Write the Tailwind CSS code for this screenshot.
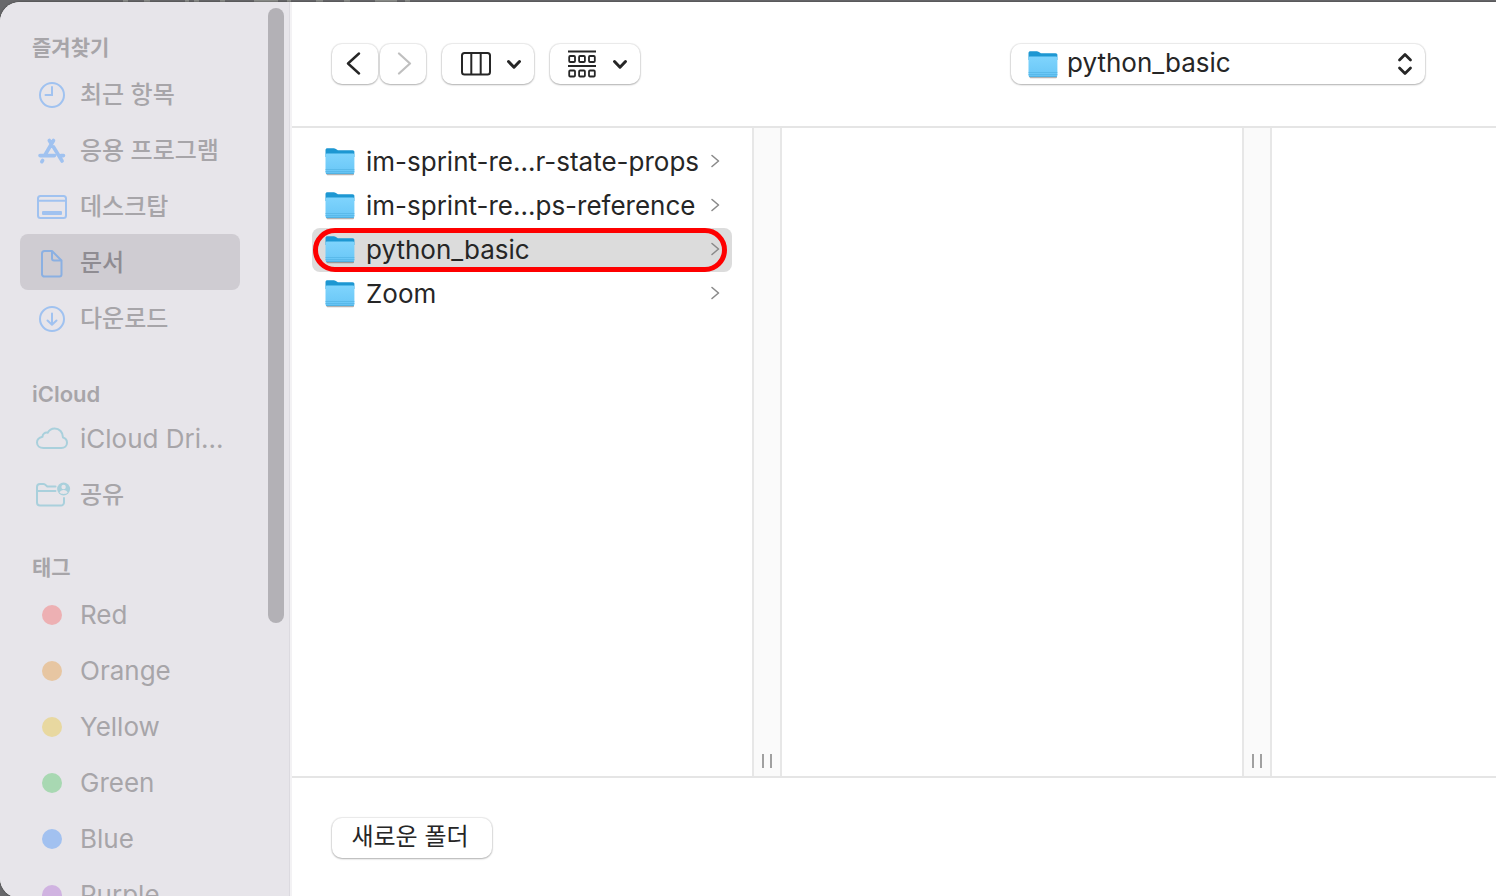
<!DOCTYPE html>
<html lang="ko">
<head>
<meta charset="utf-8">
<title>python_basic</title>
<script src="https://cdn.jsdelivr.net/npm/@tailwindcss/browser@4"></script>
</head>
<body class="relative h-screen overflow-hidden bg-[#68686b] font-['Inter','Noto_Sans_CJK_KR',sans-serif] text-[26px] text-[#262626]">
<svg width="0" height="0" class="absolute" aria-hidden="true">
  <defs>
    <linearGradient id="front" x1="0" y1="0" x2="0" y2="1"><stop offset="0" stop-color="#7fd4fd"/><stop offset="1" stop-color="#68c6f6"/></linearGradient>
    <symbol id="folder" viewBox="0 0 32 32">
      <path d="M2.500 28.500h27.500v1a1 1 0 0 1-1 .8H3.500a1 1 0 0 1-1-.8z" fill="#000" opacity=".3"/>
      <path d="M1.500 5c0-1.200.8-1.800 2-1.800h6.200c.9 0 1.500.2 2.200.8l1.200.8c.5.4 1 .5 1.700.5H28.500c1.300 0 1.900.7 1.900 1.800V12H1.500z" fill="#1d97d2"/>
      <path d="M1.500 10c0-1 .7-1.500 1.700-1.500h25.500c1 0 1.700.5 1.700 1.500v17.200c0 1.200-.6 1.800-1.800 1.800H3.300c-1.200 0-1.800-.6-1.800-1.800z" fill="url(#front)"/>
      <path d="M1.500 24.500h28.900M1.500 26.500h28.900" stroke="#52b3e4" stroke-width=".7"/>
      <path d="M2 28.400h27.900" stroke="#48a9da" stroke-width=".8"/>
    </symbol>
    <symbol id="chev" viewBox="0 0 10 14"><path d="M2 1.500l6.500 5.500L2 12.500" fill="none" stroke="#8a8a8a" stroke-width="1.600" stroke-linecap="round" stroke-linejoin="round"/></symbol>
    <symbol id="down" viewBox="0 0 16 12"><path d="M2.500 3.500L8 9.200 13.500 3.500" fill="none" stroke="#262626" stroke-width="3" stroke-linecap="round" stroke-linejoin="round"/></symbol>
  </defs>
</svg>
<svg class="absolute left-0 top-0" width="420" height="2" fill="#8d8f8c" aria-hidden="true">
  <path d="M123 0h5v2h-5zM144 0h6v2h-6zM185 0h4v2h-4zM194 0h5v2h-5zM220 0h5v2h-5zM254 0h24v2h-24zM287 0h4v2h-4zM316 0h7v2h-7zM344 0h6v2h-6zM375 0h22v2h-22zM405 0h5v2h-5z"/>
</svg>

<div class="relative mt-0.5 flex h-screen overflow-hidden rounded-l-[20px] bg-white shadow-[0_0_2px_#333]">
  <aside class="flex w-[292px] shrink-0 border-r-2 border-[#f3f2f4] bg-[#e7e5ea] text-[#a7a5a9]">
    <nav class="w-[268px] pr-7 pl-5 [&_a]:flex [&_a]:h-14 [&_a]:items-center [&_a]:gap-3 [&_a]:rounded-lg [&_a]:pl-4 [&_a]:whitespace-nowrap [&_h2]:flex [&_h2]:h-16 [&_h2]:items-end [&_h2]:pl-3 [&_h2]:text-[22px] [&_h2]:leading-8 [&_h2]:font-semibold [&_svg]:w-9 [&_svg]:h-8 [&_svg]:-mr-1 [&_svg]:shrink-0">
      <h2 class="pb-0.5"><span class="text-[21px]">즐겨찾기</span></h2>
      <a href="#"><svg viewBox="0 0 36 32" fill="none" stroke="#a0c2f0" stroke-width="2" stroke-linecap="round"><circle cx="16" cy="17" r="12"/><path d="M16 9v8H9.500"/></svg><span class="pt-0.5 text-[24px] font-medium">최근 항목</span></a>
      <a href="#"><svg viewBox="0 0 36 32" fill="none" stroke="#a0c2f0" stroke-width="3.600" stroke-linecap="round"><path d="M4 21.600h14.500M25 21.600h2.500M17.500 6.500L9 21M13.300 6.500l2 3.200M17.500 13l8.600 14M6.600 26.500l-.8 1.200"/></svg><span class="pt-0.5 text-[24px] font-medium">응용 프로그램</span></a>
      <a href="#"><svg viewBox="0 0 36 32" fill="none" stroke="#a0c2f0" stroke-width="2"><rect x="2" y="6" width="28" height="22" rx="2.500"/><path d="M2 10.800h28"/><rect x="6" y="21" width="20" height="4" rx="1" fill="#a0c2f0" stroke="none"/></svg><span class="pt-0.5 text-[24px] font-medium">데스크탑</span></a>
      <a href="#" aria-current="page" class="bg-[#cfccd2] text-[#8f8c92]"><svg viewBox="0 0 36 32" fill="none" stroke="#8bb0e2" stroke-width="2" stroke-linejoin="round"><path d="M8.500 5H16l9.500 9.500v14a2 2 0 0 1-2 2h-15A2.500 2.500 0 0 1 6 28.500v-21A2.500 2.500 0 0 1 8.500 5z"/><path d="M16 5v7.500a2 2 0 0 0 2 2h7.500"/></svg><span class="pt-0.5 text-[24px] font-medium">문서</span></a>
      <a href="#"><svg viewBox="0 0 36 32" fill="none" stroke="#a0c2f0" stroke-width="2" stroke-linecap="round" stroke-linejoin="round"><circle cx="16" cy="17" r="12"/><path d="M16 11.500v11M11.500 18.500l4.500 4.200 4.500-4.200"/></svg><span class="pt-0.5 text-[24px] font-medium">다운로드</span></a>
      <h2>iCloud</h2>
      <a href="#"><svg viewBox="0 0 36 32" fill="none" stroke="#a9d0dc" stroke-width="2" stroke-linejoin="round"><path d="M7.500 26h17.800c3.300 0 5.700-2.300 5.700-5.300 0-2.700-1.600-4.500-4-5.200 0-5.200-3.700-9-8.300-9-3.200 0-5.600 1.600-7 4.200-2.800-.6-5.200 1.200-5.200 4.100C3.400 15.500 1 17.400 1 20.500c0 3.100 2.700 5.500 6.500 5.500z"/></svg><span>iCloud Dri...</span></a>
      <a href="#"><svg viewBox="0 0 36 32" fill="none" stroke="#a9d0dc" stroke-width="2" stroke-linecap="round"><path d="M19.500 8.400h-8.200L9 6.500c-.6-.4-1-.5-1.600-.5H4a3 3 0 0 0-3 3v15.500a3 3 0 0 0 3 3h21a3 3 0 0 0 3-3V20M1 13h18.500"/><circle cx="27.600" cy="11" r="6.500" fill="#a9d0dc" stroke="none"/><circle cx="27.600" cy="9" r="2.200" fill="#e7e5ea" stroke="none"/><path d="M23.600 14.700c.6-1.900 2-2.700 4-2.700s3.400.8 4 2.700c-2 1.600-6 1.600-8 0z" fill="#e7e5ea" stroke="none"/></svg><span class="pt-0.5 text-[24px] font-medium">공유</span></a>
      <h2 class="pb-0.5"><span class="text-[21px]">태그</span></h2>
      <a href="#"><svg viewBox="0 0 36 32"><circle cx="16" cy="17" r="10" fill="#edb0b3"/></svg>Red</a>
      <a href="#"><svg viewBox="0 0 36 32"><circle cx="16" cy="17" r="10" fill="#e7c6a2"/></svg>Orange</a>
      <a href="#"><svg viewBox="0 0 36 32"><circle cx="16" cy="17" r="10" fill="#e8d8a0"/></svg>Yellow</a>
      <a href="#"><svg viewBox="0 0 36 32"><circle cx="16" cy="17" r="10" fill="#a8d8b2"/></svg>Green</a>
      <a href="#"><svg viewBox="0 0 36 32"><circle cx="16" cy="17" r="10" fill="#a2c1f0"/></svg>Blue</a>
      <a href="#"><svg viewBox="0 0 36 32"><circle cx="16" cy="17" r="10" fill="#d0b3e1"/></svg>Purple</a>
    </nav>
    <div class="mt-1.5 h-[615px] w-4 rounded-full bg-[#b3b1b6]"></div>
    <div class="ml-auto w-px bg-[#dcdae0]"></div>
  </aside>

  <main class="flex min-w-0 flex-1 flex-col">
    <header class="flex h-[126px] shrink-0 items-center border-b-2 border-[#e5e5e5] pr-[71px] pl-10 [&_button]:flex [&_button]:h-10 [&_button]:items-center [&_button]:justify-center [&_button]:rounded-[10px] [&_button]:bg-white [&_button]:shadow-[0_0_1px_1px_rgba(0,0,0,0.08),0_1px_2px_rgba(0,0,0,0.25)]">
      <div class="flex gap-0.5">
        <button aria-label="뒤로" class="w-[46px]"><svg width="16" height="24" viewBox="0 0 16 24" class="mr-1" fill="none" stroke="#262626" stroke-width="2.400" stroke-linecap="round" stroke-linejoin="round"><path d="M14 1.500L3 11.500l11 10"/></svg></button>
        <button aria-label="앞으로" class="w-[46px]"><svg width="16" height="24" viewBox="0 0 16 24" class="ml-1" fill="none" stroke="#bfbfbf" stroke-width="2.200" stroke-linecap="round" stroke-linejoin="round"><path d="M2 1.500l11 10-11 10"/></svg></button>
      </div>
      <button aria-label="보기" class="ml-4 w-[92px] gap-3.5 pl-1.5"><svg width="32" height="26" viewBox="0 0 32 26" fill="none" stroke="#262626" stroke-width="2"><rect x="2" y="2" width="28" height="21.500" rx="2.500"/><path d="M11.300 2v21.500M20.700 2v21.500"/></svg><svg width="16" height="12"><use href="#down"/></svg></button>
      <button aria-label="그룹" class="ml-4 w-[90px] gap-4 pl-1.5"><svg width="28" height="28" viewBox="0 0 28 28" fill="none" stroke="#262626" stroke-width="1.800"><path d="M0 1.500h28M0 16h28"/><rect x="1.200" y="6" width="5.800" height="6" rx="1"/><rect x="11.100" y="6" width="5.800" height="6" rx="1"/><rect x="21" y="6" width="5.800" height="6" rx="1"/><rect x="1.200" y="20.500" width="5.800" height="6" rx="1"/><rect x="11.100" y="20.500" width="5.800" height="6" rx="1"/><rect x="21" y="20.500" width="5.800" height="6" rx="1"/></svg><svg width="16" height="12"><use href="#down"/></svg></button>
      <div class="relative ml-auto w-[414px]">
        <select aria-label="위치" class="block h-10 w-full appearance-none rounded-[10px] bg-white pb-0.5 pl-14 leading-9 shadow-[0_0_1px_1px_rgba(0,0,0,0.08),0_1px_2px_rgba(0,0,0,0.25)]"><option>python_basic</option></select>
        <svg width="32" height="32" class="pointer-events-none absolute top-1 left-4"><use href="#folder"/></svg>
        <svg width="16" height="24" viewBox="0 0 16 24" class="pointer-events-none absolute top-2 right-3" fill="none" stroke="#262626" stroke-width="2.800" stroke-linecap="round" stroke-linejoin="round"><path d="M2.500 8L8 2.500 13.500 8M2.500 16L8 21.500 13.500 16"/></svg>
      </div>
    </header>

    <div class="flex min-h-0 flex-1 border-b-2 border-[#e5e5e5]">
      <ul class="w-[460px] shrink-0 px-5 pt-3 [&_a]:flex [&_a]:h-11 [&_a]:items-center [&_a]:rounded-lg [&_a]:pr-3 [&_a]:pb-0.5 [&_a]:pl-3 [&_span]:ml-2.5 [&_span]:flex-1 [&_span]:whitespace-nowrap">
        <li><a href="#"><svg width="32" height="32"><use href="#folder"/></svg><span>im-sprint-re...r-state-props</span><svg width="10" height="14"><use href="#chev"/></svg></a></li>
        <li><a href="#"><svg width="32" height="32"><use href="#folder"/></svg><span>im-sprint-re...ps-reference</span><svg width="10" height="14"><use href="#chev"/></svg></a></li>
        <li class="relative"><a href="#" aria-current="true" class="bg-[#dcdcdc]"><svg width="32" height="32"><use href="#folder"/></svg><span>python_basic</span><svg width="10" height="14"><use href="#chev"/></svg></a>
          <div class="pointer-events-none absolute inset-y-0 right-[5px] left-px rounded-full border-5 border-[#fe0000]"></div></li>
        <li><a href="#"><svg width="32" height="32"><use href="#folder"/></svg><span>Zoom</span><svg width="10" height="14"><use href="#chev"/></svg></a></li>
      </ul>
      <div class="flex w-[30px] shrink-0 items-end justify-center gap-1.5 border-x-2 border-[#e7e7e7] bg-[#fafafa] pb-2"><i class="h-3.5 w-0.5 bg-[#a0a0a0]"></i><i class="h-3.5 w-0.5 bg-[#a0a0a0]"></i></div>
      <div class="w-[460px] shrink-0"></div>
      <div class="flex w-[30px] shrink-0 items-end justify-center gap-1.5 border-x-2 border-[#e7e7e7] bg-[#fafafa] pb-2"><i class="h-3.5 w-0.5 bg-[#a0a0a0]"></i><i class="h-3.5 w-0.5 bg-[#a0a0a0]"></i></div>
      <div class="flex-1"></div>
    </div>

    <footer class="flex h-[120px] shrink-0 items-start pt-10 pl-10">
      <button class="h-10 w-40 rounded-[10px] bg-white pr-1 pb-0.5 text-[24px] leading-9 shadow-[0_0_1px_1px_rgba(0,0,0,0.08),0_1px_2px_rgba(0,0,0,0.25)]">새로운 폴더</button>
    </footer>
  </main>
</div>
</body>
</html>
